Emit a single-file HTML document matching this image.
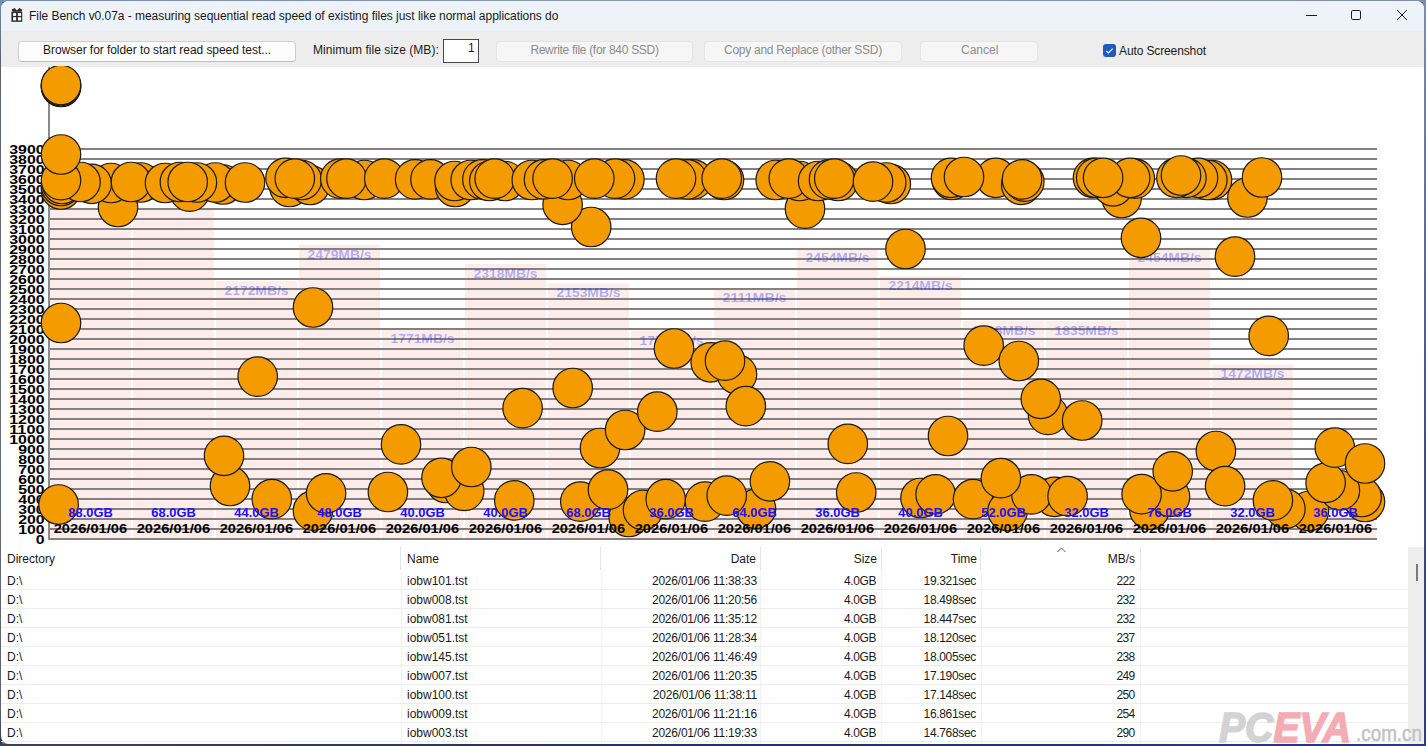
<!DOCTYPE html>
<html><head><meta charset="utf-8">
<style>
*{margin:0;padding:0;box-sizing:border-box}
html,body{width:1426px;height:746px;overflow:hidden;font-family:"Liberation Sans",sans-serif}
body{position:relative;background:#5f6a78}
.a{position:absolute}
#win{position:absolute;left:1px;top:1px;width:1423px;height:743px;border-radius:8px;overflow:hidden;background:#fff}
#title{position:absolute;left:0;top:0;width:1423px;height:30px;background:#eef3f9}
#toolbar{position:absolute;left:0;top:30px;width:1423px;height:35.7px;background:#ededed}
.t12{position:absolute;font-size:12px;color:#1a1a1a;white-space:nowrap;line-height:14px}
.btn{position:absolute;height:21px;border:1px solid #cfcfcf;border-bottom-color:#bdbdbd;border-radius:4px;background:#fdfdfd}
.btn.dis{background:#f6f6f6;border-color:#e4e4e4}
.gray{color:#8c8c8c}
.yl{font:bold 13.6px "Liberation Sans",sans-serif;fill:#000}
.gb{font:bold 13.4px "Liberation Sans",sans-serif;fill:#2010ff}
.dt{font:bold 13.4px "Liberation Sans",sans-serif;fill:#000}
.mb{font:bold 13.4px "Liberation Sans",sans-serif;fill:#1018ff;fill-opacity:0.32}
.row{position:absolute;left:1px;width:1407px;height:1px;background:#ededed}
.vsep{position:absolute;top:571px;width:1px;height:173px;background:#f2f2f2}
.hsep{position:absolute;top:547px;width:1px;height:23px;background:#e5e5e5}
.r{text-align:right}
</style></head><body>
<div class="a" style="left:0;top:0;width:1426px;height:2px;background:linear-gradient(90deg,#7390b5,#8a9bb0 50%,#7d90a8)"></div>
<div class="a" style="left:0;top:0;width:2px;height:746px;background:linear-gradient(180deg,#6f8fb8 0,#5a6470 8%,#6a737d 50%,#5b636d 95%,#2a3550 100%)"></div>
<div class="a" style="left:1423px;top:0;width:3px;height:746px;background:linear-gradient(180deg,#7a90aa 0,#3c4f8a 60%,#2b3d85 100%)"></div>
<div class="a" style="left:0;top:744px;width:1426px;height:2px;background:linear-gradient(90deg,#3a4258,#24306a 50%,#2a3a80)"></div>
<div id="win">
 <div id="title"></div>
 <div id="toolbar"></div>
</div>
<!-- title bar -->
<svg class="a" style="left:0;top:0" width="30" height="30">
 <rect x="11.4" y="11.7" width="10.8" height="10.1" fill="#2b2b2b"/>
 <rect x="13.1" y="13.1" width="3" height="2.8" fill="#fff"/><rect x="17.9" y="13.1" width="3.2" height="2.8" fill="#fff"/>
 <rect x="13.1" y="17.2" width="3" height="3.2" fill="#fff"/><rect x="17.9" y="17.2" width="3.2" height="3.2" fill="#fff"/>
 <path d="M11.6 9.8 L14.6 7.9 L17 10.6 L19.3 7.9 L22.3 9.8 L21.2 11.8 L12.7 11.8 Z" fill="#2b2b2b"/>
</svg>
<div class="t12" style="left:29px;top:9px;letter-spacing:-0.035px">File Bench v0.07a - measuring sequential read speed of existing files just like normal applications do</div>
<svg class="a" style="left:1290px;top:0" width="136" height="32">
 <rect x="16" y="14.5" width="10.5" height="1" fill="#1a1a1a" shape-rendering="crispEdges"/>
 <rect x="61.5" y="10.5" width="9" height="9" rx="1.3" fill="none" stroke="#1a1a1a" stroke-width="1"/>
 <path d="M107 10 L117 20 M117 10 L107 20" stroke="#1a1a1a" stroke-width="1"/>
</svg>
<!-- toolbar -->
<div class="btn" style="left:18px;top:40.5px;width:278px"></div>
<div class="t12" style="left:43px;top:43px;letter-spacing:-0.06px">Browser for folder to start read speed test...</div>
<div class="t12" style="left:313px;top:43px;letter-spacing:0.05px">Minimum file size (MB):</div>
<div class="a" style="left:443px;top:39px;width:36px;height:24px;border:1px solid #474747;background:#fff"></div>
<div class="t12" style="left:468px;top:41px">1</div>
<div class="btn dis" style="left:496px;top:40.5px;width:197px"></div>
<div class="t12 gray" style="left:496px;width:197px;text-align:center;top:43px;letter-spacing:-0.3px">Rewrite file (for 840 SSD)</div>
<div class="btn dis" style="left:704px;top:40.5px;width:198px"></div>
<div class="t12 gray" style="left:704px;width:198px;text-align:center;top:43px;letter-spacing:-0.27px">Copy and Replace (other SSD)</div>
<div class="btn dis" style="left:920px;top:40.5px;width:118px"></div>
<div class="t12 gray" style="left:961px;top:43px">Cancel</div>
<div class="a" style="left:1103px;top:44px;width:13px;height:13px;border-radius:3px;background:#1e5bbd"></div>
<svg class="a" style="left:1103px;top:44px" width="13" height="13"><path d="M3.3 6.8 L5.4 8.9 L9.7 4.6" fill="none" stroke="#fff" stroke-width="1.1"/></svg>
<div class="t12" style="left:1119px;top:44px;letter-spacing:-0.12px">Auto Screenshot</div>
<!-- chart -->
<svg width="1423" height="479" viewBox="0 66 1423 479" style="position:absolute;left:0;top:66px">
<rect x="50" y="207.9" width="81" height="331.1" fill="#fcedeb"/>
<rect x="133" y="207.9" width="81" height="331.1" fill="#fcedeb"/>
<rect x="216" y="281.2" width="81" height="257.8" fill="#fcedeb"/>
<rect x="299" y="244.7" width="81" height="294.3" fill="#fcedeb"/>
<rect x="382" y="328.8" width="81" height="210.2" fill="#fcedeb"/>
<rect x="465" y="263.9" width="81" height="275.1" fill="#fcedeb"/>
<rect x="548" y="283.4" width="81" height="255.6" fill="#fcedeb"/>
<rect x="631" y="330.7" width="81" height="208.3" fill="#fcedeb"/>
<rect x="714" y="288.4" width="81" height="250.6" fill="#fcedeb"/>
<rect x="797" y="247.7" width="81" height="291.3" fill="#fcedeb"/>
<rect x="880" y="276.2" width="81" height="262.8" fill="#fcedeb"/>
<rect x="963" y="320.8" width="81" height="218.2" fill="#fcedeb"/>
<rect x="1046" y="321.2" width="81" height="217.8" fill="#fcedeb"/>
<rect x="1129" y="247.7" width="81" height="291.3" fill="#fcedeb"/>
<rect x="1212" y="364.3" width="81" height="174.7" fill="#fcedeb"/>
<rect x="1295" y="504.6" width="81" height="34.4" fill="#fcedeb"/>
<rect x="49" y="538" width="1328" height="2" fill="#848080"/>
<rect x="49" y="528" width="1328" height="2" fill="#848080"/>
<rect x="49" y="518" width="1328" height="2" fill="#848080"/>
<rect x="49" y="508" width="1328" height="2" fill="#848080"/>
<rect x="49" y="498" width="1328" height="2" fill="#848080"/>
<rect x="49" y="488" width="1328" height="2" fill="#848080"/>
<rect x="49" y="478" width="1328" height="2" fill="#848080"/>
<rect x="49" y="468" width="1328" height="2" fill="#848080"/>
<rect x="49" y="458" width="1328" height="2" fill="#848080"/>
<rect x="49" y="448" width="1328" height="2" fill="#848080"/>
<rect x="49" y="438" width="1328" height="2" fill="#848080"/>
<rect x="49" y="428" width="1328" height="2" fill="#848080"/>
<rect x="49" y="418" width="1328" height="2" fill="#848080"/>
<rect x="49" y="408" width="1328" height="2" fill="#848080"/>
<rect x="49" y="398" width="1328" height="2" fill="#848080"/>
<rect x="49" y="388" width="1328" height="2" fill="#848080"/>
<rect x="49" y="378" width="1328" height="2" fill="#848080"/>
<rect x="49" y="368" width="1328" height="2" fill="#848080"/>
<rect x="49" y="358" width="1328" height="2" fill="#848080"/>
<rect x="49" y="348" width="1328" height="2" fill="#848080"/>
<rect x="49" y="338" width="1328" height="2" fill="#848080"/>
<rect x="49" y="328" width="1328" height="2" fill="#848080"/>
<rect x="49" y="318" width="1328" height="2" fill="#848080"/>
<rect x="49" y="308" width="1328" height="2" fill="#848080"/>
<rect x="49" y="298" width="1328" height="2" fill="#848080"/>
<rect x="49" y="288" width="1328" height="2" fill="#848080"/>
<rect x="49" y="278" width="1328" height="2" fill="#848080"/>
<rect x="49" y="268" width="1328" height="2" fill="#848080"/>
<rect x="49" y="258" width="1328" height="2" fill="#848080"/>
<rect x="49" y="248" width="1328" height="2" fill="#848080"/>
<rect x="49" y="238" width="1328" height="2" fill="#848080"/>
<rect x="49" y="228" width="1328" height="2" fill="#848080"/>
<rect x="49" y="218" width="1328" height="2" fill="#848080"/>
<rect x="49" y="208" width="1328" height="2" fill="#848080"/>
<rect x="49" y="198" width="1328" height="2" fill="#848080"/>
<rect x="49" y="188" width="1328" height="2" fill="#848080"/>
<rect x="49" y="178" width="1328" height="2" fill="#848080"/>
<rect x="49" y="168" width="1328" height="2" fill="#848080"/>
<rect x="49" y="158" width="1328" height="2" fill="#848080"/>
<rect x="49" y="148" width="1328" height="2" fill="#848080"/>
<text x="224.5" y="295.0" textLength="64" lengthAdjust="spacingAndGlyphs" class="mb">2172MB/s</text>
<text x="307.5" y="258.5" textLength="64" lengthAdjust="spacingAndGlyphs" class="mb">2479MB/s</text>
<text x="390.5" y="342.6" textLength="64" lengthAdjust="spacingAndGlyphs" class="mb">1771MB/s</text>
<text x="473.5" y="277.7" textLength="64" lengthAdjust="spacingAndGlyphs" class="mb">2318MB/s</text>
<text x="556.5" y="297.2" textLength="64" lengthAdjust="spacingAndGlyphs" class="mb">2153MB/s</text>
<text x="639.5" y="344.5" textLength="64" lengthAdjust="spacingAndGlyphs" class="mb">1755MB/s</text>
<text x="722.5" y="302.2" textLength="64" lengthAdjust="spacingAndGlyphs" class="mb">2111MB/s</text>
<text x="805.5" y="261.5" textLength="64" lengthAdjust="spacingAndGlyphs" class="mb">2454MB/s</text>
<text x="888.5" y="290.0" textLength="64" lengthAdjust="spacingAndGlyphs" class="mb">2214MB/s</text>
<text x="971.5" y="334.6" textLength="64" lengthAdjust="spacingAndGlyphs" class="mb">1838MB/s</text>
<text x="1054.5" y="335.0" textLength="64" lengthAdjust="spacingAndGlyphs" class="mb">1835MB/s</text>
<text x="1137.5" y="261.5" textLength="64" lengthAdjust="spacingAndGlyphs" class="mb">2454MB/s</text>
<text x="1220.5" y="378.1" textLength="64" lengthAdjust="spacingAndGlyphs" class="mb">1472MB/s</text>
<rect x="48" y="67" width="2" height="473" fill="#8a8a8a"/>
<text x="35.8" y="543.8" textLength="8.8" lengthAdjust="spacingAndGlyphs" class="yl">0</text>
<text x="18.2" y="533.8" textLength="26.4" lengthAdjust="spacingAndGlyphs" class="yl">100</text>
<text x="18.2" y="523.8" textLength="26.4" lengthAdjust="spacingAndGlyphs" class="yl">200</text>
<text x="18.2" y="513.8" textLength="26.4" lengthAdjust="spacingAndGlyphs" class="yl">300</text>
<text x="18.2" y="503.8" textLength="26.4" lengthAdjust="spacingAndGlyphs" class="yl">400</text>
<text x="18.2" y="493.8" textLength="26.4" lengthAdjust="spacingAndGlyphs" class="yl">500</text>
<text x="18.2" y="483.8" textLength="26.4" lengthAdjust="spacingAndGlyphs" class="yl">600</text>
<text x="18.2" y="473.8" textLength="26.4" lengthAdjust="spacingAndGlyphs" class="yl">700</text>
<text x="18.2" y="463.8" textLength="26.4" lengthAdjust="spacingAndGlyphs" class="yl">800</text>
<text x="18.2" y="453.8" textLength="26.4" lengthAdjust="spacingAndGlyphs" class="yl">900</text>
<text x="9.2" y="443.8" textLength="35.4" lengthAdjust="spacingAndGlyphs" class="yl">1000</text>
<text x="9.2" y="433.8" textLength="35.4" lengthAdjust="spacingAndGlyphs" class="yl">1100</text>
<text x="9.2" y="423.8" textLength="35.4" lengthAdjust="spacingAndGlyphs" class="yl">1200</text>
<text x="9.2" y="413.8" textLength="35.4" lengthAdjust="spacingAndGlyphs" class="yl">1300</text>
<text x="9.2" y="403.8" textLength="35.4" lengthAdjust="spacingAndGlyphs" class="yl">1400</text>
<text x="9.2" y="393.8" textLength="35.4" lengthAdjust="spacingAndGlyphs" class="yl">1500</text>
<text x="9.2" y="383.8" textLength="35.4" lengthAdjust="spacingAndGlyphs" class="yl">1600</text>
<text x="9.2" y="373.8" textLength="35.4" lengthAdjust="spacingAndGlyphs" class="yl">1700</text>
<text x="9.2" y="363.8" textLength="35.4" lengthAdjust="spacingAndGlyphs" class="yl">1800</text>
<text x="9.2" y="353.8" textLength="35.4" lengthAdjust="spacingAndGlyphs" class="yl">1900</text>
<text x="9.2" y="343.8" textLength="35.4" lengthAdjust="spacingAndGlyphs" class="yl">2000</text>
<text x="9.2" y="333.8" textLength="35.4" lengthAdjust="spacingAndGlyphs" class="yl">2100</text>
<text x="9.2" y="323.8" textLength="35.4" lengthAdjust="spacingAndGlyphs" class="yl">2200</text>
<text x="9.2" y="313.8" textLength="35.4" lengthAdjust="spacingAndGlyphs" class="yl">2300</text>
<text x="9.2" y="303.8" textLength="35.4" lengthAdjust="spacingAndGlyphs" class="yl">2400</text>
<text x="9.2" y="293.8" textLength="35.4" lengthAdjust="spacingAndGlyphs" class="yl">2500</text>
<text x="9.2" y="283.8" textLength="35.4" lengthAdjust="spacingAndGlyphs" class="yl">2600</text>
<text x="9.2" y="273.8" textLength="35.4" lengthAdjust="spacingAndGlyphs" class="yl">2700</text>
<text x="9.2" y="263.8" textLength="35.4" lengthAdjust="spacingAndGlyphs" class="yl">2800</text>
<text x="9.2" y="253.8" textLength="35.4" lengthAdjust="spacingAndGlyphs" class="yl">2900</text>
<text x="9.2" y="243.8" textLength="35.4" lengthAdjust="spacingAndGlyphs" class="yl">3000</text>
<text x="9.2" y="233.8" textLength="35.4" lengthAdjust="spacingAndGlyphs" class="yl">3100</text>
<text x="9.2" y="223.8" textLength="35.4" lengthAdjust="spacingAndGlyphs" class="yl">3200</text>
<text x="9.2" y="213.8" textLength="35.4" lengthAdjust="spacingAndGlyphs" class="yl">3300</text>
<text x="9.2" y="203.8" textLength="35.4" lengthAdjust="spacingAndGlyphs" class="yl">3400</text>
<text x="9.2" y="193.8" textLength="35.4" lengthAdjust="spacingAndGlyphs" class="yl">3500</text>
<text x="9.2" y="183.8" textLength="35.4" lengthAdjust="spacingAndGlyphs" class="yl">3600</text>
<text x="9.2" y="173.8" textLength="35.4" lengthAdjust="spacingAndGlyphs" class="yl">3700</text>
<text x="9.2" y="163.8" textLength="35.4" lengthAdjust="spacingAndGlyphs" class="yl">3800</text>
<text x="9.2" y="153.8" textLength="35.4" lengthAdjust="spacingAndGlyphs" class="yl">3900</text>
<circle cx="118" cy="207" r="19.75" fill="#f49b00" stroke="#1a1a1a" stroke-width="1.2"/>
<circle cx="189.7" cy="191.7" r="19.75" fill="#f49b00" stroke="#1a1a1a" stroke-width="1.2"/>
<circle cx="591.2" cy="227" r="19.75" fill="#f49b00" stroke="#1a1a1a" stroke-width="1.2"/>
<circle cx="562.6" cy="204.8" r="19.75" fill="#f49b00" stroke="#1a1a1a" stroke-width="1.2"/>
<circle cx="805" cy="208.7" r="19.75" fill="#f49b00" stroke="#1a1a1a" stroke-width="1.2"/>
<circle cx="1121.6" cy="198" r="19.75" fill="#f49b00" stroke="#1a1a1a" stroke-width="1.2"/>
<circle cx="1247.4" cy="197.5" r="19.75" fill="#f49b00" stroke="#1a1a1a" stroke-width="1.2"/>
<circle cx="61" cy="189.5" r="19.75" fill="#f49b00" stroke="#1a1a1a" stroke-width="1.2"/>
<circle cx="61" cy="186" r="19.75" fill="#f49b00" stroke="#1a1a1a" stroke-width="1.2"/>
<circle cx="62" cy="184" r="19.75" fill="#f49b00" stroke="#1a1a1a" stroke-width="1.2"/>
<circle cx="111" cy="183" r="19.75" fill="#f49b00" stroke="#1a1a1a" stroke-width="1.2"/>
<circle cx="91.7" cy="183.8" r="19.75" fill="#f49b00" stroke="#1a1a1a" stroke-width="1.2"/>
<circle cx="80.5" cy="182" r="19.75" fill="#f49b00" stroke="#1a1a1a" stroke-width="1.2"/>
<circle cx="61" cy="180.2" r="19.75" fill="#f49b00" stroke="#1a1a1a" stroke-width="1.2"/>
<circle cx="61" cy="154.5" r="19.75" fill="#f49b00" stroke="#1a1a1a" stroke-width="1.2"/>
<circle cx="140.6" cy="182.5" r="19.75" fill="#f49b00" stroke="#1a1a1a" stroke-width="1.2"/>
<circle cx="131" cy="182" r="19.75" fill="#f49b00" stroke="#1a1a1a" stroke-width="1.2"/>
<circle cx="165" cy="183" r="19.75" fill="#f49b00" stroke="#1a1a1a" stroke-width="1.2"/>
<circle cx="222.9" cy="184.5" r="19.75" fill="#f49b00" stroke="#1a1a1a" stroke-width="1.2"/>
<circle cx="215.2" cy="182.5" r="19.75" fill="#f49b00" stroke="#1a1a1a" stroke-width="1.2"/>
<circle cx="196.9" cy="182.5" r="19.75" fill="#f49b00" stroke="#1a1a1a" stroke-width="1.2"/>
<circle cx="179.9" cy="182" r="19.75" fill="#f49b00" stroke="#1a1a1a" stroke-width="1.2"/>
<circle cx="187.7" cy="182" r="19.75" fill="#f49b00" stroke="#1a1a1a" stroke-width="1.2"/>
<circle cx="245" cy="182.5" r="19.75" fill="#f49b00" stroke="#1a1a1a" stroke-width="1.2"/>
<circle cx="289.4" cy="187" r="19.75" fill="#f49b00" stroke="#1a1a1a" stroke-width="1.2"/>
<circle cx="310" cy="185" r="19.75" fill="#f49b00" stroke="#1a1a1a" stroke-width="1.2"/>
<circle cx="301.7" cy="180" r="19.75" fill="#f49b00" stroke="#1a1a1a" stroke-width="1.2"/>
<circle cx="285.5" cy="177.8" r="19.75" fill="#f49b00" stroke="#1a1a1a" stroke-width="1.2"/>
<circle cx="294.8" cy="178.6" r="19.75" fill="#f49b00" stroke="#1a1a1a" stroke-width="1.2"/>
<circle cx="364.2" cy="180" r="19.75" fill="#f49b00" stroke="#1a1a1a" stroke-width="1.2"/>
<circle cx="340.3" cy="178.6" r="19.75" fill="#f49b00" stroke="#1a1a1a" stroke-width="1.2"/>
<circle cx="346.5" cy="178.6" r="19.75" fill="#f49b00" stroke="#1a1a1a" stroke-width="1.2"/>
<circle cx="384.3" cy="178.6" r="19.75" fill="#f49b00" stroke="#1a1a1a" stroke-width="1.2"/>
<circle cx="415.1" cy="179.4" r="19.75" fill="#f49b00" stroke="#1a1a1a" stroke-width="1.2"/>
<circle cx="430.5" cy="179.4" r="19.75" fill="#f49b00" stroke="#1a1a1a" stroke-width="1.2"/>
<circle cx="455.2" cy="187" r="19.75" fill="#f49b00" stroke="#1a1a1a" stroke-width="1.2"/>
<circle cx="454.5" cy="181" r="19.75" fill="#f49b00" stroke="#1a1a1a" stroke-width="1.2"/>
<circle cx="470.7" cy="180" r="19.75" fill="#f49b00" stroke="#1a1a1a" stroke-width="1.2"/>
<circle cx="504.8" cy="181" r="19.75" fill="#f49b00" stroke="#1a1a1a" stroke-width="1.2"/>
<circle cx="482.4" cy="179.4" r="19.75" fill="#f49b00" stroke="#1a1a1a" stroke-width="1.2"/>
<circle cx="489.3" cy="181" r="19.75" fill="#f49b00" stroke="#1a1a1a" stroke-width="1.2"/>
<circle cx="494.7" cy="178.6" r="19.75" fill="#f49b00" stroke="#1a1a1a" stroke-width="1.2"/>
<circle cx="531.8" cy="180" r="19.75" fill="#f49b00" stroke="#1a1a1a" stroke-width="1.2"/>
<circle cx="568" cy="180" r="19.75" fill="#f49b00" stroke="#1a1a1a" stroke-width="1.2"/>
<circle cx="544" cy="179.4" r="19.75" fill="#f49b00" stroke="#1a1a1a" stroke-width="1.2"/>
<circle cx="552.6" cy="178.6" r="19.75" fill="#f49b00" stroke="#1a1a1a" stroke-width="1.2"/>
<circle cx="624.4" cy="179.4" r="19.75" fill="#f49b00" stroke="#1a1a1a" stroke-width="1.2"/>
<circle cx="615" cy="178.6" r="19.75" fill="#f49b00" stroke="#1a1a1a" stroke-width="1.2"/>
<circle cx="594.3" cy="178.6" r="19.75" fill="#f49b00" stroke="#1a1a1a" stroke-width="1.2"/>
<circle cx="693" cy="179.4" r="19.75" fill="#f49b00" stroke="#1a1a1a" stroke-width="1.2"/>
<circle cx="687" cy="179.4" r="19.75" fill="#f49b00" stroke="#1a1a1a" stroke-width="1.2"/>
<circle cx="676" cy="178.6" r="19.75" fill="#f49b00" stroke="#1a1a1a" stroke-width="1.2"/>
<circle cx="724" cy="180" r="19.75" fill="#f49b00" stroke="#1a1a1a" stroke-width="1.2"/>
<circle cx="721.7" cy="178.6" r="19.75" fill="#f49b00" stroke="#1a1a1a" stroke-width="1.2"/>
<circle cx="775.7" cy="180" r="19.75" fill="#f49b00" stroke="#1a1a1a" stroke-width="1.2"/>
<circle cx="799.6" cy="181" r="19.75" fill="#f49b00" stroke="#1a1a1a" stroke-width="1.2"/>
<circle cx="788.8" cy="178.6" r="19.75" fill="#f49b00" stroke="#1a1a1a" stroke-width="1.2"/>
<circle cx="818.1" cy="181" r="19.75" fill="#f49b00" stroke="#1a1a1a" stroke-width="1.2"/>
<circle cx="838.2" cy="181" r="19.75" fill="#f49b00" stroke="#1a1a1a" stroke-width="1.2"/>
<circle cx="829" cy="179.4" r="19.75" fill="#f49b00" stroke="#1a1a1a" stroke-width="1.2"/>
<circle cx="834.3" cy="178.6" r="19.75" fill="#f49b00" stroke="#1a1a1a" stroke-width="1.2"/>
<circle cx="890.8" cy="184" r="19.75" fill="#f49b00" stroke="#1a1a1a" stroke-width="1.2"/>
<circle cx="886.2" cy="182.5" r="19.75" fill="#f49b00" stroke="#1a1a1a" stroke-width="1.2"/>
<circle cx="873" cy="181.7" r="19.75" fill="#f49b00" stroke="#1a1a1a" stroke-width="1.2"/>
<circle cx="951.8" cy="180" r="19.75" fill="#f49b00" stroke="#1a1a1a" stroke-width="1.2"/>
<circle cx="951" cy="177.8" r="19.75" fill="#f49b00" stroke="#1a1a1a" stroke-width="1.2"/>
<circle cx="995.7" cy="177.8" r="19.75" fill="#f49b00" stroke="#1a1a1a" stroke-width="1.2"/>
<circle cx="964" cy="177" r="19.75" fill="#f49b00" stroke="#1a1a1a" stroke-width="1.2"/>
<circle cx="1021.2" cy="184.8" r="19.75" fill="#f49b00" stroke="#1a1a1a" stroke-width="1.2"/>
<circle cx="1024.3" cy="181.7" r="19.75" fill="#f49b00" stroke="#1a1a1a" stroke-width="1.2"/>
<circle cx="1022" cy="179.4" r="19.75" fill="#f49b00" stroke="#1a1a1a" stroke-width="1.2"/>
<circle cx="1113.1" cy="186.3" r="19.75" fill="#f49b00" stroke="#1a1a1a" stroke-width="1.2"/>
<circle cx="1134.8" cy="178.6" r="19.75" fill="#f49b00" stroke="#1a1a1a" stroke-width="1.2"/>
<circle cx="1130.1" cy="177.8" r="19.75" fill="#f49b00" stroke="#1a1a1a" stroke-width="1.2"/>
<circle cx="1093" cy="177.8" r="19.75" fill="#f49b00" stroke="#1a1a1a" stroke-width="1.2"/>
<circle cx="1096.2" cy="177.8" r="19.75" fill="#f49b00" stroke="#1a1a1a" stroke-width="1.2"/>
<circle cx="1103.1" cy="177.8" r="19.75" fill="#f49b00" stroke="#1a1a1a" stroke-width="1.2"/>
<circle cx="1212" cy="180" r="19.75" fill="#f49b00" stroke="#1a1a1a" stroke-width="1.2"/>
<circle cx="1207.3" cy="180" r="19.75" fill="#f49b00" stroke="#1a1a1a" stroke-width="1.2"/>
<circle cx="1198" cy="177.8" r="19.75" fill="#f49b00" stroke="#1a1a1a" stroke-width="1.2"/>
<circle cx="1186.4" cy="177.8" r="19.75" fill="#f49b00" stroke="#1a1a1a" stroke-width="1.2"/>
<circle cx="1176.4" cy="177.8" r="19.75" fill="#f49b00" stroke="#1a1a1a" stroke-width="1.2"/>
<circle cx="1181" cy="175.5" r="19.75" fill="#f49b00" stroke="#1a1a1a" stroke-width="1.2"/>
<circle cx="1262" cy="177.5" r="19.75" fill="#f49b00" stroke="#1a1a1a" stroke-width="1.2"/>
<circle cx="61" cy="87" r="19.75" fill="#f49b00" stroke="#1a1a1a" stroke-width="1.2"/>
<circle cx="61" cy="86" r="19.75" fill="#f49b00" stroke="#1a1a1a" stroke-width="1.2"/>
<circle cx="61" cy="85" r="19.75" fill="#f49b00" stroke="#1a1a1a" stroke-width="1.2"/>
<circle cx="61" cy="323" r="19.75" fill="#f49b00" stroke="#1a1a1a" stroke-width="1.2"/>
<circle cx="58.6" cy="504.5" r="19.75" fill="#f49b00" stroke="#1a1a1a" stroke-width="1.2"/>
<circle cx="230" cy="486" r="19.75" fill="#f49b00" stroke="#1a1a1a" stroke-width="1.2"/>
<circle cx="224" cy="455.8" r="19.75" fill="#f49b00" stroke="#1a1a1a" stroke-width="1.2"/>
<circle cx="257.7" cy="376.6" r="19.75" fill="#f49b00" stroke="#1a1a1a" stroke-width="1.2"/>
<circle cx="271.8" cy="499.2" r="19.75" fill="#f49b00" stroke="#1a1a1a" stroke-width="1.2"/>
<circle cx="313" cy="307.5" r="19.75" fill="#f49b00" stroke="#1a1a1a" stroke-width="1.2"/>
<circle cx="313" cy="510.7" r="19.75" fill="#f49b00" stroke="#1a1a1a" stroke-width="1.2"/>
<circle cx="326.1" cy="493.3" r="19.75" fill="#f49b00" stroke="#1a1a1a" stroke-width="1.2"/>
<circle cx="387.9" cy="492" r="19.75" fill="#f49b00" stroke="#1a1a1a" stroke-width="1.2"/>
<circle cx="401" cy="444.4" r="19.75" fill="#f49b00" stroke="#1a1a1a" stroke-width="1.2"/>
<circle cx="446" cy="483" r="19.75" fill="#f49b00" stroke="#1a1a1a" stroke-width="1.2"/>
<circle cx="464.2" cy="490.9" r="19.75" fill="#f49b00" stroke="#1a1a1a" stroke-width="1.2"/>
<circle cx="441.5" cy="477.8" r="19.75" fill="#f49b00" stroke="#1a1a1a" stroke-width="1.2"/>
<circle cx="471.3" cy="467" r="19.75" fill="#f49b00" stroke="#1a1a1a" stroke-width="1.2"/>
<circle cx="522.6" cy="408.1" r="19.75" fill="#f49b00" stroke="#1a1a1a" stroke-width="1.2"/>
<circle cx="514.3" cy="500.4" r="19.75" fill="#f49b00" stroke="#1a1a1a" stroke-width="1.2"/>
<circle cx="572.7" cy="388" r="19.75" fill="#f49b00" stroke="#1a1a1a" stroke-width="1.2"/>
<circle cx="580.3" cy="501.6" r="19.75" fill="#f49b00" stroke="#1a1a1a" stroke-width="1.2"/>
<circle cx="600" cy="448" r="19.75" fill="#f49b00" stroke="#1a1a1a" stroke-width="1.2"/>
<circle cx="628.7" cy="517" r="19.75" fill="#f49b00" stroke="#1a1a1a" stroke-width="1.2"/>
<circle cx="608" cy="489.7" r="19.75" fill="#f49b00" stroke="#1a1a1a" stroke-width="1.2"/>
<circle cx="625.1" cy="430" r="19.75" fill="#f49b00" stroke="#1a1a1a" stroke-width="1.2"/>
<circle cx="643" cy="510" r="19.75" fill="#f49b00" stroke="#1a1a1a" stroke-width="1.2"/>
<circle cx="657.3" cy="411.7" r="19.75" fill="#f49b00" stroke="#1a1a1a" stroke-width="1.2"/>
<circle cx="665.7" cy="499.2" r="19.75" fill="#f49b00" stroke="#1a1a1a" stroke-width="1.2"/>
<circle cx="674" cy="348.5" r="19.75" fill="#f49b00" stroke="#1a1a1a" stroke-width="1.2"/>
<circle cx="705" cy="501.6" r="19.75" fill="#f49b00" stroke="#1a1a1a" stroke-width="1.2"/>
<circle cx="710.7" cy="362.3" r="19.75" fill="#f49b00" stroke="#1a1a1a" stroke-width="1.2"/>
<circle cx="737" cy="374.3" r="19.75" fill="#f49b00" stroke="#1a1a1a" stroke-width="1.2"/>
<circle cx="725" cy="360.7" r="19.75" fill="#f49b00" stroke="#1a1a1a" stroke-width="1.2"/>
<circle cx="745.8" cy="406.2" r="19.75" fill="#f49b00" stroke="#1a1a1a" stroke-width="1.2"/>
<circle cx="756" cy="508.8" r="19.75" fill="#f49b00" stroke="#1a1a1a" stroke-width="1.2"/>
<circle cx="726.7" cy="495.6" r="19.75" fill="#f49b00" stroke="#1a1a1a" stroke-width="1.2"/>
<circle cx="769.9" cy="481.3" r="19.75" fill="#f49b00" stroke="#1a1a1a" stroke-width="1.2"/>
<circle cx="847.8" cy="443.9" r="19.75" fill="#f49b00" stroke="#1a1a1a" stroke-width="1.2"/>
<circle cx="856.2" cy="492.5" r="19.75" fill="#f49b00" stroke="#1a1a1a" stroke-width="1.2"/>
<circle cx="905.5" cy="249" r="19.75" fill="#f49b00" stroke="#1a1a1a" stroke-width="1.2"/>
<circle cx="920.5" cy="498" r="19.75" fill="#f49b00" stroke="#1a1a1a" stroke-width="1.2"/>
<circle cx="935.6" cy="494.4" r="19.75" fill="#f49b00" stroke="#1a1a1a" stroke-width="1.2"/>
<circle cx="948" cy="436" r="19.75" fill="#f49b00" stroke="#1a1a1a" stroke-width="1.2"/>
<circle cx="973" cy="499.2" r="19.75" fill="#f49b00" stroke="#1a1a1a" stroke-width="1.2"/>
<circle cx="983.7" cy="345.6" r="19.75" fill="#f49b00" stroke="#1a1a1a" stroke-width="1.2"/>
<circle cx="1007.6" cy="511" r="19.75" fill="#f49b00" stroke="#1a1a1a" stroke-width="1.2"/>
<circle cx="1054.6" cy="496.8" r="19.75" fill="#f49b00" stroke="#1a1a1a" stroke-width="1.2"/>
<circle cx="1031.4" cy="494.4" r="19.75" fill="#f49b00" stroke="#1a1a1a" stroke-width="1.2"/>
<circle cx="1067.6" cy="496.2" r="19.75" fill="#f49b00" stroke="#1a1a1a" stroke-width="1.2"/>
<circle cx="1000.9" cy="478.2" r="19.75" fill="#f49b00" stroke="#1a1a1a" stroke-width="1.2"/>
<circle cx="1018.8" cy="361" r="19.75" fill="#f49b00" stroke="#1a1a1a" stroke-width="1.2"/>
<circle cx="1048" cy="414.9" r="19.75" fill="#f49b00" stroke="#1a1a1a" stroke-width="1.2"/>
<circle cx="1040.8" cy="398.8" r="19.75" fill="#f49b00" stroke="#1a1a1a" stroke-width="1.2"/>
<circle cx="1082.2" cy="420.5" r="19.75" fill="#f49b00" stroke="#1a1a1a" stroke-width="1.2"/>
<circle cx="1141" cy="237.8" r="19.75" fill="#f49b00" stroke="#1a1a1a" stroke-width="1.2"/>
<circle cx="1149.4" cy="509.7" r="19.75" fill="#f49b00" stroke="#1a1a1a" stroke-width="1.2"/>
<circle cx="1170" cy="496.8" r="19.75" fill="#f49b00" stroke="#1a1a1a" stroke-width="1.2"/>
<circle cx="1141.6" cy="494.2" r="19.75" fill="#f49b00" stroke="#1a1a1a" stroke-width="1.2"/>
<circle cx="1172.7" cy="471.3" r="19.75" fill="#f49b00" stroke="#1a1a1a" stroke-width="1.2"/>
<circle cx="1215.9" cy="451" r="19.75" fill="#f49b00" stroke="#1a1a1a" stroke-width="1.2"/>
<circle cx="1225.1" cy="486.2" r="19.75" fill="#f49b00" stroke="#1a1a1a" stroke-width="1.2"/>
<circle cx="1235" cy="256.7" r="19.75" fill="#f49b00" stroke="#1a1a1a" stroke-width="1.2"/>
<circle cx="1268.7" cy="335.9" r="19.75" fill="#f49b00" stroke="#1a1a1a" stroke-width="1.2"/>
<circle cx="1308.9" cy="511" r="19.75" fill="#f49b00" stroke="#1a1a1a" stroke-width="1.2"/>
<circle cx="1285.4" cy="508.8" r="19.75" fill="#f49b00" stroke="#1a1a1a" stroke-width="1.2"/>
<circle cx="1272.9" cy="500.4" r="19.75" fill="#f49b00" stroke="#1a1a1a" stroke-width="1.2"/>
<circle cx="1365" cy="502" r="19.75" fill="#f49b00" stroke="#1a1a1a" stroke-width="1.2"/>
<circle cx="1361.6" cy="497" r="19.75" fill="#f49b00" stroke="#1a1a1a" stroke-width="1.2"/>
<circle cx="1339.9" cy="490.4" r="19.75" fill="#f49b00" stroke="#1a1a1a" stroke-width="1.2"/>
<circle cx="1325.6" cy="482.8" r="19.75" fill="#f49b00" stroke="#1a1a1a" stroke-width="1.2"/>
<circle cx="1334.8" cy="447.6" r="19.75" fill="#f49b00" stroke="#1a1a1a" stroke-width="1.2"/>
<circle cx="1365" cy="463.5" r="19.75" fill="#f49b00" stroke="#1a1a1a" stroke-width="1.2"/>
<text x="68.3" y="516.8" textLength="44.5" lengthAdjust="spacingAndGlyphs" class="gb">88.0GB</text>
<text x="53.7" y="532.8" textLength="73.5" lengthAdjust="spacingAndGlyphs" class="dt">2026/01/06</text>
<text x="151.3" y="516.8" textLength="44.5" lengthAdjust="spacingAndGlyphs" class="gb">68.0GB</text>
<text x="136.7" y="532.8" textLength="73.5" lengthAdjust="spacingAndGlyphs" class="dt">2026/01/06</text>
<text x="234.3" y="516.8" textLength="44.5" lengthAdjust="spacingAndGlyphs" class="gb">44.0GB</text>
<text x="219.7" y="532.8" textLength="73.5" lengthAdjust="spacingAndGlyphs" class="dt">2026/01/06</text>
<text x="317.3" y="516.8" textLength="44.5" lengthAdjust="spacingAndGlyphs" class="gb">48.0GB</text>
<text x="302.7" y="532.8" textLength="73.5" lengthAdjust="spacingAndGlyphs" class="dt">2026/01/06</text>
<text x="400.3" y="516.8" textLength="44.5" lengthAdjust="spacingAndGlyphs" class="gb">40.0GB</text>
<text x="385.7" y="532.8" textLength="73.5" lengthAdjust="spacingAndGlyphs" class="dt">2026/01/06</text>
<text x="483.3" y="516.8" textLength="44.5" lengthAdjust="spacingAndGlyphs" class="gb">40.0GB</text>
<text x="468.7" y="532.8" textLength="73.5" lengthAdjust="spacingAndGlyphs" class="dt">2026/01/06</text>
<text x="566.3" y="516.8" textLength="44.5" lengthAdjust="spacingAndGlyphs" class="gb">68.0GB</text>
<text x="551.7" y="532.8" textLength="73.5" lengthAdjust="spacingAndGlyphs" class="dt">2026/01/06</text>
<text x="649.3" y="516.8" textLength="44.5" lengthAdjust="spacingAndGlyphs" class="gb">36.0GB</text>
<text x="634.7" y="532.8" textLength="73.5" lengthAdjust="spacingAndGlyphs" class="dt">2026/01/06</text>
<text x="732.3" y="516.8" textLength="44.5" lengthAdjust="spacingAndGlyphs" class="gb">64.0GB</text>
<text x="717.7" y="532.8" textLength="73.5" lengthAdjust="spacingAndGlyphs" class="dt">2026/01/06</text>
<text x="815.3" y="516.8" textLength="44.5" lengthAdjust="spacingAndGlyphs" class="gb">36.0GB</text>
<text x="800.7" y="532.8" textLength="73.5" lengthAdjust="spacingAndGlyphs" class="dt">2026/01/06</text>
<text x="898.3" y="516.8" textLength="44.5" lengthAdjust="spacingAndGlyphs" class="gb">40.0GB</text>
<text x="883.7" y="532.8" textLength="73.5" lengthAdjust="spacingAndGlyphs" class="dt">2026/01/06</text>
<text x="981.3" y="516.8" textLength="44.5" lengthAdjust="spacingAndGlyphs" class="gb">52.0GB</text>
<text x="966.7" y="532.8" textLength="73.5" lengthAdjust="spacingAndGlyphs" class="dt">2026/01/06</text>
<text x="1064.3" y="516.8" textLength="44.5" lengthAdjust="spacingAndGlyphs" class="gb">32.0GB</text>
<text x="1049.7" y="532.8" textLength="73.5" lengthAdjust="spacingAndGlyphs" class="dt">2026/01/06</text>
<text x="1147.3" y="516.8" textLength="44.5" lengthAdjust="spacingAndGlyphs" class="gb">76.0GB</text>
<text x="1132.7" y="532.8" textLength="73.5" lengthAdjust="spacingAndGlyphs" class="dt">2026/01/06</text>
<text x="1230.3" y="516.8" textLength="44.5" lengthAdjust="spacingAndGlyphs" class="gb">32.0GB</text>
<text x="1215.7" y="532.8" textLength="73.5" lengthAdjust="spacingAndGlyphs" class="dt">2026/01/06</text>
<text x="1313.3" y="516.8" textLength="44.5" lengthAdjust="spacingAndGlyphs" class="gb">36.0GB</text>
<text x="1298.7" y="532.8" textLength="73.5" lengthAdjust="spacingAndGlyphs" class="dt">2026/01/06</text>
</svg>
<!-- list -->
<div class="t12" style="left:7px;top:552px">Directory</div>
<div class="t12" style="left:407px;top:552px">Name</div>
<div class="t12 r" style="left:656px;width:100px;top:552px">Date</div>
<div class="t12 r" style="left:777px;width:100px;top:552px">Size</div>
<div class="t12 r" style="left:877px;width:100px;top:552px">Time</div>
<div class="t12 r" style="left:1035px;width:100px;top:552px">MB/s</div>
<div class="hsep" style="left:400px"></div><div class="hsep" style="left:600px"></div><div class="hsep" style="left:760px"></div><div class="hsep" style="left:881px"></div><div class="hsep" style="left:980px"></div><div class="hsep" style="left:1140px"></div>
<div class="vsep" style="left:401px"></div><div class="vsep" style="left:601px"></div><div class="vsep" style="left:760px"></div><div class="vsep" style="left:881px"></div><div class="vsep" style="left:981px"></div><div class="vsep" style="left:1140px"></div>
<svg class="a" style="left:1056px;top:545.5px" width="12" height="8"><path d="M1.5 6 L5.5 2 L9.5 6" fill="none" stroke="#555" stroke-width="1"/></svg>
<div class="t12" style="left:7px;top:574px">D:\</div><div class="t12" style="left:407px;top:574px">iobw101.tst</div><div class="t12 r" style="left:557px;width:200px;top:574px;letter-spacing:-0.22px">2026/01/06 11:38:33</div><div class="t12 r" style="left:776px;width:100px;top:574px;letter-spacing:-0.4px">4.0GB</div><div class="t12 r" style="left:876px;width:100px;top:574px;letter-spacing:-0.33px">19.321sec</div><div class="t12 r" style="left:1034.5px;width:100px;top:574px;letter-spacing:-0.7px">222</div><div class="row" style="top:589px"></div>
<div class="t12" style="left:7px;top:593px">D:\</div><div class="t12" style="left:407px;top:593px">iobw008.tst</div><div class="t12 r" style="left:557px;width:200px;top:593px;letter-spacing:-0.22px">2026/01/06 11:20:56</div><div class="t12 r" style="left:776px;width:100px;top:593px;letter-spacing:-0.4px">4.0GB</div><div class="t12 r" style="left:876px;width:100px;top:593px;letter-spacing:-0.33px">18.498sec</div><div class="t12 r" style="left:1034.5px;width:100px;top:593px;letter-spacing:-0.7px">232</div><div class="row" style="top:608px"></div>
<div class="t12" style="left:7px;top:612px">D:\</div><div class="t12" style="left:407px;top:612px">iobw081.tst</div><div class="t12 r" style="left:557px;width:200px;top:612px;letter-spacing:-0.22px">2026/01/06 11:35:12</div><div class="t12 r" style="left:776px;width:100px;top:612px;letter-spacing:-0.4px">4.0GB</div><div class="t12 r" style="left:876px;width:100px;top:612px;letter-spacing:-0.33px">18.447sec</div><div class="t12 r" style="left:1034.5px;width:100px;top:612px;letter-spacing:-0.7px">232</div><div class="row" style="top:627px"></div>
<div class="t12" style="left:7px;top:631px">D:\</div><div class="t12" style="left:407px;top:631px">iobw051.tst</div><div class="t12 r" style="left:557px;width:200px;top:631px;letter-spacing:-0.22px">2026/01/06 11:28:34</div><div class="t12 r" style="left:776px;width:100px;top:631px;letter-spacing:-0.4px">4.0GB</div><div class="t12 r" style="left:876px;width:100px;top:631px;letter-spacing:-0.33px">18.120sec</div><div class="t12 r" style="left:1034.5px;width:100px;top:631px;letter-spacing:-0.7px">237</div><div class="row" style="top:646px"></div>
<div class="t12" style="left:7px;top:650px">D:\</div><div class="t12" style="left:407px;top:650px">iobw145.tst</div><div class="t12 r" style="left:557px;width:200px;top:650px;letter-spacing:-0.22px">2026/01/06 11:46:49</div><div class="t12 r" style="left:776px;width:100px;top:650px;letter-spacing:-0.4px">4.0GB</div><div class="t12 r" style="left:876px;width:100px;top:650px;letter-spacing:-0.33px">18.005sec</div><div class="t12 r" style="left:1034.5px;width:100px;top:650px;letter-spacing:-0.7px">238</div><div class="row" style="top:665px"></div>
<div class="t12" style="left:7px;top:669px">D:\</div><div class="t12" style="left:407px;top:669px">iobw007.tst</div><div class="t12 r" style="left:557px;width:200px;top:669px;letter-spacing:-0.22px">2026/01/06 11:20:35</div><div class="t12 r" style="left:776px;width:100px;top:669px;letter-spacing:-0.4px">4.0GB</div><div class="t12 r" style="left:876px;width:100px;top:669px;letter-spacing:-0.33px">17.190sec</div><div class="t12 r" style="left:1034.5px;width:100px;top:669px;letter-spacing:-0.7px">249</div><div class="row" style="top:684px"></div>
<div class="t12" style="left:7px;top:688px">D:\</div><div class="t12" style="left:407px;top:688px">iobw100.tst</div><div class="t12 r" style="left:557px;width:200px;top:688px;letter-spacing:-0.22px">2026/01/06 11:38:11</div><div class="t12 r" style="left:776px;width:100px;top:688px;letter-spacing:-0.4px">4.0GB</div><div class="t12 r" style="left:876px;width:100px;top:688px;letter-spacing:-0.33px">17.148sec</div><div class="t12 r" style="left:1034.5px;width:100px;top:688px;letter-spacing:-0.7px">250</div><div class="row" style="top:703px"></div>
<div class="t12" style="left:7px;top:707px">D:\</div><div class="t12" style="left:407px;top:707px">iobw009.tst</div><div class="t12 r" style="left:557px;width:200px;top:707px;letter-spacing:-0.22px">2026/01/06 11:21:16</div><div class="t12 r" style="left:776px;width:100px;top:707px;letter-spacing:-0.4px">4.0GB</div><div class="t12 r" style="left:876px;width:100px;top:707px;letter-spacing:-0.33px">16.861sec</div><div class="t12 r" style="left:1034.5px;width:100px;top:707px;letter-spacing:-0.7px">254</div><div class="row" style="top:722px"></div>
<div class="t12" style="left:7px;top:726px">D:\</div><div class="t12" style="left:407px;top:726px">iobw003.tst</div><div class="t12 r" style="left:557px;width:200px;top:726px;letter-spacing:-0.22px">2026/01/06 11:19:33</div><div class="t12 r" style="left:776px;width:100px;top:726px;letter-spacing:-0.4px">4.0GB</div><div class="t12 r" style="left:876px;width:100px;top:726px;letter-spacing:-0.33px">14.768sec</div><div class="t12 r" style="left:1034.5px;width:100px;top:726px;letter-spacing:-0.7px">290</div><div class="row" style="top:741px"></div>
<div class="a" style="left:1408px;top:547px;width:16px;height:197px;background:#eeeeee"></div>
<div class="a" style="left:1416px;top:564px;width:2px;height:17px;background:#7a7a7a"></div>
<!-- watermark -->
<svg class="a" style="left:1200px;top:700px" width="226" height="46"><text x="19" y="41.8" font-family="Liberation Sans" font-weight="bold" font-style="italic" font-size="42.5" textLength="132" lengthAdjust="spacingAndGlyphs" stroke-width="1.6" opacity="0.92"><tspan fill="#d0d0d0" stroke="#d0d0d0">PC</tspan><tspan fill="#f4a5ae" stroke="#f4a5ae">EVA</tspan></text><text x="156" y="41.4" font-family="Liberation Sans" font-size="21.5" fill="#c2c2c2" stroke="#c2c2c2" stroke-width="0.5" textLength="66" lengthAdjust="spacingAndGlyphs">.com.cn</text></svg>
</body></html>
